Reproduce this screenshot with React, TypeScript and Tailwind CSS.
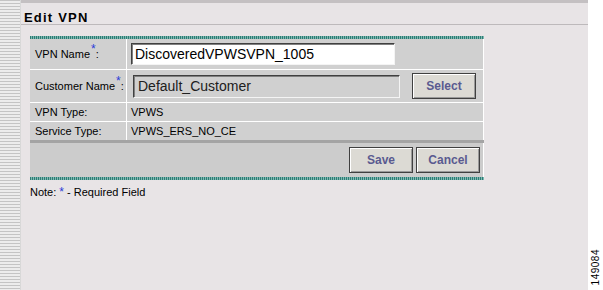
import React from 'react';

const font = { fontFamily: '"Liberation Sans", Arial, sans-serif' };

function Req() {
  return <sup className="text-[#2a3ad8] text-[12px] -top-[5px] ml-[1px]">*</sup>;
}

function Btn({ label, className = '' }: { label: string; className?: string }) {
  return (
    <div className={`h-[26px] w-[64px] flex items-center justify-center bg-[#dcdad4] border border-[#404040] shadow-[inset_1px_1px_0_#ffffff,inset_-1px_-1px_0_#9a9a9a] text-[12px] font-bold text-[#5a5a90] ${className}`}>
      {label}
    </div>
  );
}

export default function App() {
  return (
    <div className="flex w-[603px] h-[290px] bg-white overflow-hidden" style={font}>
      {/* striped left rail */}
      <div className="w-[21px] h-full border-r border-[#d8d8d8] bg-[repeating-linear-gradient(to_bottom,#c4c4c4_0px,#c4c4c4_1px,#ececec_1px,#ececec_3px)]" />

      <div className="w-[567px] h-full bg-[#e8e4e6] border-t-[3px] border-[#c4c0c2] flex flex-col">
        <div className="pl-[3px] pt-[5px] h-[21px] text-[13px] font-bold tracking-[1.2px] text-black">Edit VPN</div>
        <div className="h-[1px] bg-[#bdb9bb] mr-[-2px]" />

        {/* form table */}
        <div className="ml-[9px] mt-[11px] w-[454px] flex flex-col">
          <div className="h-[3px] bg-[repeating-linear-gradient(to_right,#2c7d76_0px,#2c7d76_1px,#7fb8b0_1px,#7fb8b0_2px)]" />
          <div className="bg-white flex flex-col gap-[1px] border-r border-white">
            <div className="grid grid-cols-[96px_1fr] gap-[1px] h-[30px]">
              <div className="bg-[#d0d0d0] flex items-center pl-[5px] text-[11px] text-black">
                <span>VPN Name<Req />:</span>
              </div>
              <div className="bg-[#d0d0d0] flex items-center pl-[4px]">
                <div className="w-[264px] h-[22px] bg-white border border-[#f4f4f4] border-t-[#404040] border-l-[#404040] shadow-[inset_1px_1px_0_#808080] flex items-center pl-[3px] text-[14px] text-black">
                  DiscoveredVPWSVPN_1005
                </div>
              </div>
            </div>
            <div className="grid grid-cols-[96px_1fr] gap-[1px] h-[32px]">
              <div className="bg-[#d0d0d0] flex items-center pl-[5px] text-[11px] text-black">
                <span>Customer Name<Req />:</span>
              </div>
              <div className="bg-[#d0d0d0] flex items-center pl-[6px] pr-[7px] justify-between">
                <div className="w-[267px] h-[23px] bg-[#d0d0d0] border border-[#f4f4f4] border-t-[#404040] border-l-[#404040] shadow-[inset_1px_1px_0_#808080] flex items-center pl-[4px] text-[14px] text-[#202020]">
                  Default_Customer
                </div>
                <Btn label="Select" />
              </div>
            </div>
            <div className="grid grid-cols-[96px_1fr] gap-[1px] h-[18px]">
              <div className="bg-[#d0d0d0] flex items-center pl-[5px] text-[11px] text-black">VPN Type:</div>
              <div className="bg-[#d0d0d0] flex items-center pl-[4px] text-[11px] text-black">VPWS</div>
            </div>
            <div className="grid grid-cols-[96px_1fr] gap-[1px] h-[18px]">
              <div className="bg-[#d0d0d0] flex items-center pl-[5px] text-[11px] text-black">Service Type:</div>
              <div className="bg-[#d0d0d0] flex items-center pl-[4px] text-[11px] text-black">VPWS_ERS_NO_CE</div>
            </div>
          </div>
          <div className="h-[3px] bg-[#a4a4a4]" />
          <div className="h-[34px] bg-[#cccccc] border-r border-white flex items-center justify-end gap-[3px] pr-[3px]">
            <Btn label="Save" />
            <Btn label="Cancel" />
          </div>
          <div className="h-[3px] bg-[repeating-linear-gradient(to_right,#2c7d76_0px,#2c7d76_1px,#7fb8b0_1px,#7fb8b0_2px)]" />
        </div>

        <div className="ml-[9px] mt-[3px] text-[11px] text-black">
          Note: <span className="text-[#2a3ad8] text-[12px]">*</span> - Required Field
        </div>
      </div>

      <div className="flex-1 h-full bg-white flex items-end justify-center pb-[5px]">
        <div className="[writing-mode:vertical-rl] rotate-180 text-[10px] text-black tracking-[0.5px]">149084</div>
      </div>
    </div>
  );
}
